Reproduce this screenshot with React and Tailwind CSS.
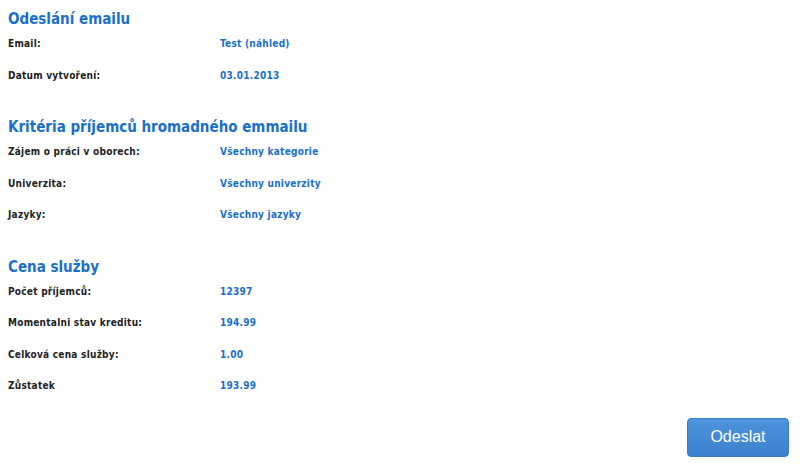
export default function App() {
  const sections = [
    {
      title: 'Odeslání emailu',
      rows: [
        ['Email:', 'Test (náhled)'],
        ['Datum vytvoření:', '03.01.2013'],
      ],
    },
    {
      title: 'Kritéria příjemců hromadného emmailu',
      rows: [
        ['Zájem o práci v oborech:', 'Všechny kategorie'],
        ['Univerzita:', 'Všechny univerzity'],
        ['Jazyky:', 'Všechny jazyky'],
      ],
    },
    {
      title: 'Cena služby',
      rows: [
        ['Počet příjemců:', '12397'],
        ['Momentalni stav kreditu:', '194.99'],
        ['Celková cena služby:', '1.00'],
        ['Zůstatek', '193.99'],
      ],
    },
  ];

  return (
    <div className="w-[800px] h-[472px] bg-white overflow-hidden pt-[10px] pl-[8px] pr-[11px] font-['DejaVu_Sans_Condensed','DejaVu_Sans',Verdana,sans-serif]">
      {sections.map((s, i) => (
        <div key={s.title} className={i > 0 ? 'mt-[27px]' : ''}>
          <h2 className="h-[18px] leading-[18px] text-[15px] font-bold text-[#1a6fca]">{s.title}</h2>
          {s.rows.map(([label, value]) => (
            <div key={label} className="flex items-center h-[31.5px] text-[10px] font-bold tracking-[0.25px]">
              <div className="w-[212px] text-[#222]">{label}</div>
              <div className="text-[#1a6fca]">{value}</div>
            </div>
          ))}
        </div>
      ))}

      <div className="flex justify-end mt-[16px]">
        <button className="w-[102px] h-[39px] rounded-[4px] border border-[#3a7cc6] bg-gradient-to-b from-[#4d94dc] to-[#3b80cd] text-white text-[16px] font-['Liberation_Sans',Arial,sans-serif]">
          Odeslat
        </button>
      </div>
    </div>
  );
}
